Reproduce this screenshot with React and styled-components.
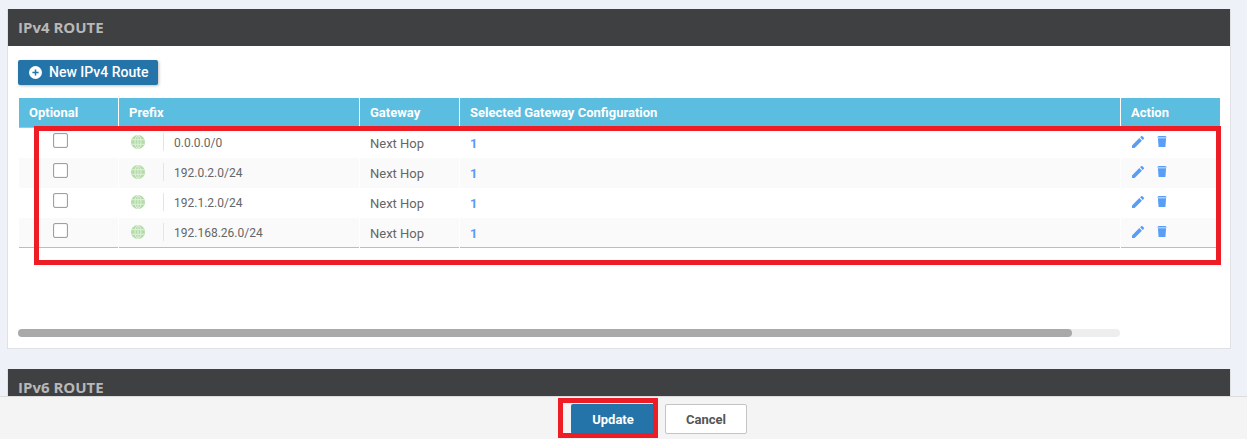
import React from 'react';
import styled, { createGlobalStyle } from 'styled-components';

const GlobalStyle = createGlobalStyle`
  html, body {
    margin: 0;
    padding: 0;
    height: 100%;
    overflow: hidden;
    background: #eef1f7;
    font-family: Roboto, "Liberation Sans", sans-serif;
  }
  #root { height: 100%; }
  * { box-sizing: border-box; }
`;

const Page = styled.div`
  height: 439px;
  display: flex;
  flex-direction: column;
`;

const Content = styled.div`
  flex: 1;
  min-height: 0;
  overflow: hidden;
  padding: 9px 16px 0 7px;
  display: flex;
  flex-direction: column;
  gap: 20px;
`;

const Panel = styled.section`
  flex: none;
  background: #fff;
  border: 1px solid #dfe1e4;
  border-top: 0;
`;

const PanelHeader = styled.h2`
  margin: 0;
  height: 37px;
  padding-left: 10px;
  background: #3f4042;
  color: #b8b8b8;
  font-family: "Open Sans", Roboto, sans-serif;
  font-size: 15px;
  font-weight: 700;
  line-height: 36px;
`;

const PanelBody = styled.div`
  height: 302px;
  padding: 14px 10px 0 10px;
  display: flex;
  flex-direction: column;
  align-items: flex-start;
`;

const NewButton = styled.button`
  width: 140px;
  height: 25px;
  border: 0;
  border-radius: 2px;
  padding: 0 0 1px 11px;
  display: flex;
  align-items: center;
  gap: 7px;
  background: #2474aa;
  color: #fff;
  font-family: inherit;
  font-size: 14px;
  font-weight: 500;
  box-shadow: 1px 1px 3px rgba(0, 0, 0, 0.25);
`;

const TableWrap = styled.div`
  position: relative;
  width: 1201px;
  margin: 13px 0 0 1px;
`;

const COLUMNS = '100px 241px 100px 661px 99px';

const HeadRow = styled.div`
  display: grid;
  grid-template-columns: ${COLUMNS};
  height: 30px;
  background: #5bbddf;
  border-bottom: 1px solid #bdbdbd;
`;

const HeadCell = styled.div`
  padding-left: 10px;
  color: #fff;
  font-size: 13px;
  font-weight: 700;
  line-height: 29px;
  border-right: ${(p) => (p.$last ? '0' : '1px solid #fff')};
`;

const Row = styled.div`
  display: grid;
  grid-template-columns: ${COLUMNS};
  height: 30px;
  background: ${(p) => (p.$alt ? '#fafafa' : '#fff')};
  box-shadow: ${(p) => (p.$end ? 'inset 0 -1px 0 #bdbdbd' : 'none')};
`;

const Cell = styled.div`
  padding-left: 10px;
  display: flex;
  align-items: center;
  color: #666;
  font-size: 13px;
  border-right: 1px solid #fff;
`;

const CheckCell = styled(Cell)`
  padding: 0 0 5px 34px;
`;

const Check = styled.span`
  width: 15px;
  height: 15px;
  border: 1px solid #a0a0a0;
  border-radius: 2px;
  background: #fff;
  box-shadow: inset 0 0 1px #999;
`;

const PrefixCell = styled(Cell)`
  padding-left: 12px;
  font-size: 12px;
`;

const GlobeSlot = styled.span`
  width: 33px;
  height: 18px;
  margin: -3px 10px 0 0;
  display: flex;
  align-items: center;
  border-right: 1px solid #e4e4e4;
`;

const ConfigLink = styled.span`
  color: #589df6;
  font-size: 13px;
  font-weight: 700;
`;

const ActionCell = styled(Cell)`
  padding: 0 0 3px 11px;
  gap: 13px;
  border-right: 0;
`;

const ScrollTrack = styled.div`
  width: 1102px;
  height: 8px;
  margin-top: 81px;
  border-radius: 4px;
  background: #eeeeee;
`;

const ScrollThumb = styled.div`
  width: 1054px;
  height: 8px;
  border-radius: 4px;
  background: #a9a9a9;
`;

const Footer = styled.footer`
  flex: none;
  height: 43px;
  background: #f4f4f4;
  border-top: 1px solid #dcdcdc;
  padding: 7px 0 0 571px;
  display: flex;
  align-items: flex-start;
  gap: 10px;
`;

const FootButton = styled.button`
  position: relative;
  width: ${(p) => (p.$primary ? '84px' : '82px')};
  height: 30px;
  border-radius: 2px;
  border: ${(p) => (p.$primary ? '0' : '1px solid #c4c4c4')};
  background: ${(p) => (p.$primary ? '#2474aa' : '#fff')};
  color: ${(p) => (p.$primary ? '#fff' : '#555')};
  font-family: inherit;
  font-size: 13px;
  font-weight: 700;
`;

const RedBox = styled.div`
  position: absolute;
  border: 5px solid #ee1c25;
  pointer-events: none;
  left: ${(p) => p.$left}px;
  top: ${(p) => p.$top}px;
  width: ${(p) => p.$w}px;
  height: ${(p) => p.$h}px;
`;

const PlusIcon = () => (
  <svg width="13" height="13" viewBox="0 0 13 13">
    <circle cx="6.5" cy="6.5" r="6.5" fill="#fff" />
    <path d="M6.5 3.4v6.2M3.4 6.5h6.2" stroke="#2474aa" strokeWidth="1.5" />
  </svg>
);

const GlobeIcon = () => (
  <svg width="14" height="14" viewBox="0 0 14 14">
    <circle cx="7" cy="7" r="7" fill="#b3dca8" />
    <g fill="none" stroke="#dff0da" strokeWidth="1">
      <ellipse cx="7" cy="7" rx="3" ry="6.6" />
      <path d="M7 0.4v13.2M0.8 4.7h12.4M0.8 9.3h12.4" />
    </g>
  </svg>
);

const PencilIcon = () => (
  <svg width="12" height="12" viewBox="0 0 12 12">
    <path fill="#589df6" d="M0 12V9.4L7.3 2.1 9.9 4.7 2.6 12H0zM8.1 1.3L9.1.3a1 1 0 0 1 1.4 0l1.2 1.2a1 1 0 0 1 0 1.4l-1 1L8.1 1.3z" />
  </svg>
);

const TrashIcon = () => (
  <svg width="10" height="11" viewBox="0 0 10 11">
    <path fill="#589df6" d="M1.5 0h7L10 1.6H0zM.9 2.2h8.2L8.4 11H1.6z" />
  </svg>
);

const routes = ['0.0.0.0/0', '192.0.2.0/24', '192.1.2.0/24', '192.168.26.0/24'];

const App = () => {
  return (
    <Page>
      <GlobalStyle />
      <Content>
        <Panel>
          <PanelHeader>IPv4 ROUTE</PanelHeader>
          <PanelBody>
            <NewButton>
              <PlusIcon />
              New IPv4 Route
            </NewButton>
            <TableWrap>
              <HeadRow>
                <HeadCell>Optional</HeadCell>
                <HeadCell>Prefix</HeadCell>
                <HeadCell>Gateway</HeadCell>
                <HeadCell>Selected Gateway Configuration</HeadCell>
                <HeadCell $last>Action</HeadCell>
              </HeadRow>
              {routes.map((route, i) => (
                <Row key={route} $alt={i % 2 === 1} $end={i === routes.length - 1}>
                  <CheckCell>
                    <Check />
                  </CheckCell>
                  <PrefixCell>
                    <GlobeSlot>
                      <GlobeIcon />
                    </GlobeSlot>
                    {route}
                  </PrefixCell>
                  <Cell>Next Hop</Cell>
                  <Cell>
                    <ConfigLink>1</ConfigLink>
                  </Cell>
                  <ActionCell>
                    <PencilIcon />
                    <TrashIcon />
                  </ActionCell>
                </Row>
              ))}
              <RedBox $left={15} $top={28} $w={1187} $h={139} />
            </TableWrap>
            <ScrollTrack>
              <ScrollThumb />
            </ScrollTrack>
          </PanelBody>
        </Panel>
        <Panel>
          <PanelHeader>IPv6 ROUTE</PanelHeader>
        </Panel>
      </Content>
      <Footer>
        <FootButton $primary>
          Update
          <RedBox $left={-13} $top={-6} $w={100} $h={40} />
        </FootButton>
        <FootButton>Cancel</FootButton>
      </Footer>
    </Page>
  );
};

export default App;
